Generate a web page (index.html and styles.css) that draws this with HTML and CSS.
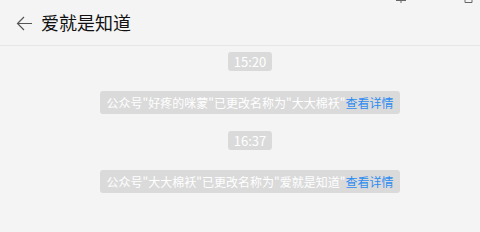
FILE: index.html
```html
<!DOCTYPE html>
<html lang="zh-CN">
<head>
<meta charset="utf-8">
<link rel="stylesheet" href="styles.css">
</head>
<body>
<div class="win">
  <div class="controls">
    <svg class="pin" width="12" height="5" viewBox="0 0 12 5"><path d="M1 1.5H11M6 1.5V4" stroke="#666" stroke-width="1" fill="none"/></svg>
    <svg class="max" width="9" height="4" viewBox="0 0 9 4"><path d="M1 0V2.5H8V0" stroke="#666" stroke-width="1" fill="none"/></svg>
  </div>
  <header class="header">
    <svg class="back" width="17" height="15" viewBox="0 0 17 15"><path d="M16 7.5H1.5M8 1L1.5 7.5L8 14" stroke="#555" stroke-width="1.2" fill="none"/></svg>
    <h1 class="title">爱就是知道</h1>
  </header>
  <main class="feed">
    <div class="time">15:20</div>
    <div class="sys">公众号"好疼的咪蒙"已更改名称为"大大棉袄"<span class="link">查看详情</span></div>
    <div class="time">16:37</div>
    <div class="sys">公众号"大大棉袄"已更改名称为"爱就是知道"<span class="link">查看详情</span></div>
  </main>
</div>
</body>
</html>
```
FILE: styles.css
```css
html, body {
  margin: 0;
  padding: 0;
  background: #f4f4f4;
}
body {
  font-family: "Noto Sans CJK SC", "Noto Sans", sans-serif;
  width: 480px;
  height: 232px;
  overflow: hidden;
}
.win {
  position: relative;
  height: 232px;
}
.controls {
  position: absolute;
  top: 0;
  right: 0;
  width: 100%;
  height: 5px;
}
.pin {
  position: absolute;
  left: 395px;
  top: -1px;
}
.max {
  position: absolute;
  left: 464px;
  top: 0;
}
.header {
  height: 45px;
  border-bottom: 1px solid #e6e6e6;
  display: flex;
  align-items: center;
  padding-left: 16px;
}
.back {
  display: block;
  margin-top: 2px;
}
.title {
  margin: -2px 0 0 8px;
  font-size: 18px;
  font-weight: normal;
  color: #111;
  line-height: 24px;
}
.feed {
  display: flex;
  flex-direction: column;
  align-items: center;
  padding-top: 6px;
  padding-left: 20px;
}
.time, .sys {
  background: #dadada;
  color: #fff;
  border-radius: 3px;
  font-size: 12px;
  white-space: nowrap;
}
.time {
  height: 19px;
  line-height: 19px;
  padding: 0 6px;
  font-size: 13px;
  margin-bottom: 20px;
}
.sys {
  height: 23px;
  line-height: 23px;
  padding: 0 7px;
  margin-bottom: 17px;
}
.link {
  color: #2d8cf0;
}
```
